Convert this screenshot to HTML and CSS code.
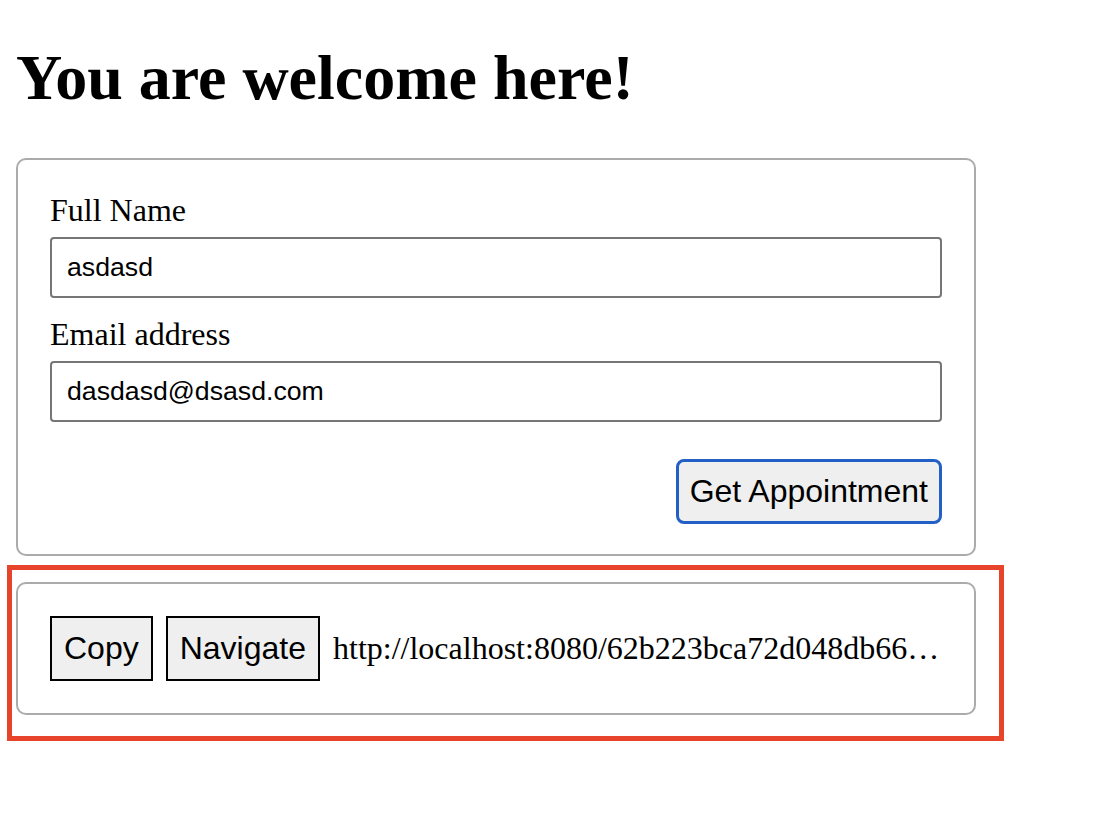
FILE: index.html
```html
<!DOCTYPE html>
<html lang="en">
<head>
<meta charset="utf-8">
<title>You are welcome here!</title>
<link rel="stylesheet" href="styles.css">
</head>
<body>
  <h1 class="title">You are welcome here!</h1>
  <form class="card form-card">
    <div class="field">
      <label class="label" for="name">Full Name</label>
      <input class="input" id="name" type="text" value="asdasd">
    </div>
    <div class="field">
      <label class="label" for="email">Email address</label>
      <input class="input" id="email" type="email" value="dasdasd@dsasd.com">
    </div>
    <div class="actions">
      <button class="submit" type="button">Get Appointment</button>
    </div>
  </form>
  <div class="card link-card">
    <button class="plain-btn" type="button">Copy</button>
    <button class="plain-btn" type="button">Navigate</button>
    <span class="url">http://localhost:8080/62b223bca72d048db66a1f3e9c07</span>
  </div>
  <div class="highlight"></div>
</body>
</html>
```
FILE: styles.css
```css
html, body {
  background: #ffffff;
}

body {
  margin: 16px;
  font-family: "Liberation Serif", "Times New Roman", serif;
  font-size: 32px;
  color: #000;
}

.title {
  font-size: 64px;
  font-weight: bold;
  margin: 25px 0 43px 0;
  line-height: 74px;
}

.card {
  box-sizing: border-box;
  width: 960px;
  border: 2px solid #ababab;
  border-radius: 10px;
  padding: 32px;
  background: #fff;
}

.form-card {
  margin: 0;
  padding-bottom: 30px;
}

.field + .field {
  margin-top: 18px;
}

.label {
  display: block;
  line-height: 37px;
  margin-bottom: 8px;
}

.input {
  display: block;
  box-sizing: border-box;
  width: 100%;
  height: 61px;
  margin: 0;
  padding: 0 15px;
  font-family: "Liberation Sans", Arial, sans-serif;
  font-size: 26.6667px;
  color: #000;
  border: 2px solid #767676;
  border-radius: 4px;
  background: #fff;
}

.actions {
  display: flex;
  justify-content: flex-end;
  margin-top: 37px;
}

.submit {
  box-sizing: border-box;
  height: 65px;
  padding: 0 11px;
  font-family: "Liberation Sans", Arial, sans-serif;
  font-size: 32px;
  color: #000;
  background: #efefef;
  border: 3px solid #2360c6;
  border-radius: 8px;
}

.link-card {
  margin-top: 26px;
  display: flex;
  align-items: center;
  gap: 13px;
}

.plain-btn {
  flex: none;
  box-sizing: border-box;
  height: 65px;
  padding: 0 12px;
  font-family: "Liberation Sans", Arial, sans-serif;
  font-size: 32px;
  color: #000;
  background: #efefef;
  border: 2px solid #000;
  border-radius: 0;
}

.url {
  flex: 1;
  min-width: 0;
  white-space: nowrap;
  overflow: hidden;
  text-overflow: ellipsis;
}

.highlight {
  position: absolute;
  left: 7px;
  top: 565px;
  width: 997px;
  height: 176px;
  box-sizing: border-box;
  border: 5px solid #e8432b;
  pointer-events: none;
}
```
